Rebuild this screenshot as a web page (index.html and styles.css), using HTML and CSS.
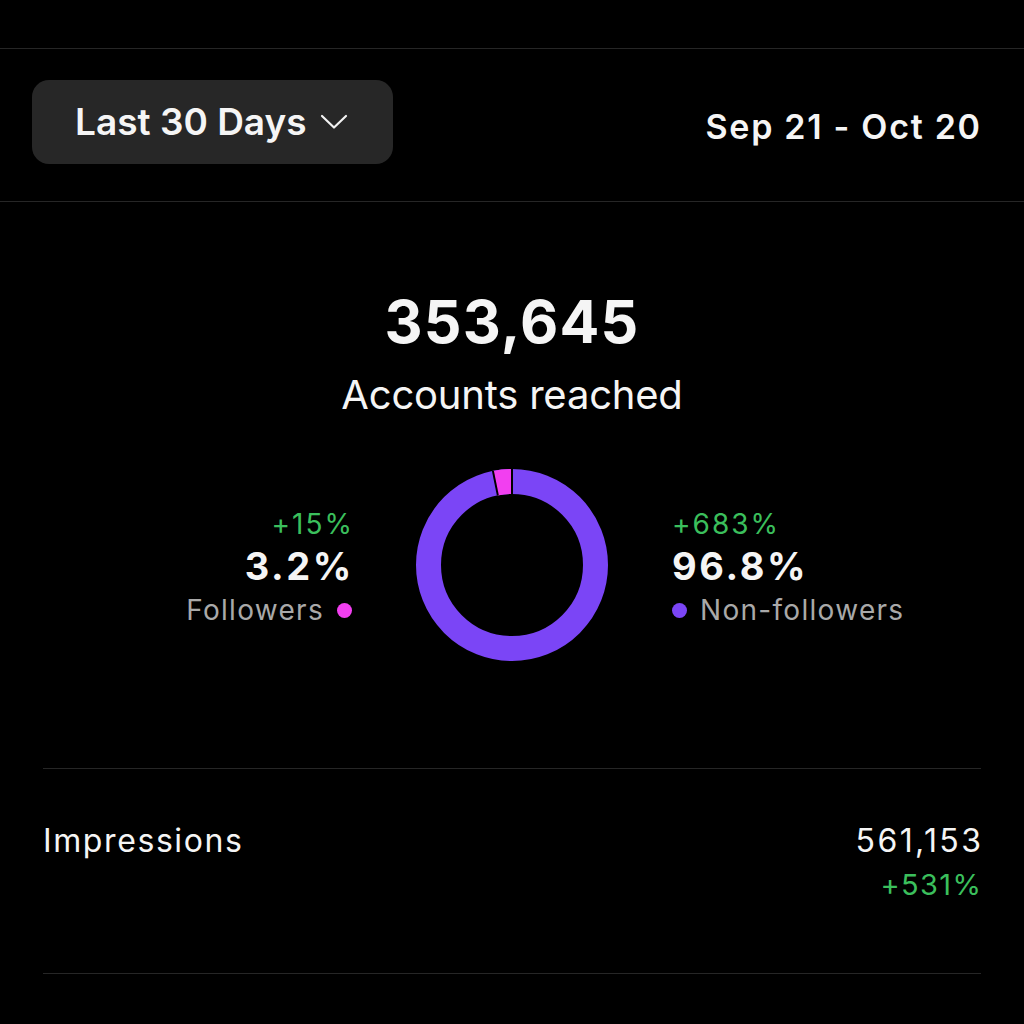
FILE: index.html
```html
<!DOCTYPE html>
<html lang="en">
<head>
<meta charset="utf-8">
<title>Accounts reached</title>
<link rel="stylesheet" href="styles.css">
</head>
<body>
<div class="page">
  <div class="rule"></div>
  <header class="range">
    <button class="range-btn" type="button">
      <span>Last 30 Days</span>
      <svg class="chev" width="28" height="16" viewBox="0 0 28 16" aria-hidden="true">
        <polyline points="2,2 14,13.5 26,2" fill="none" stroke="#f2f2f2" stroke-width="2.2" stroke-linecap="round" stroke-linejoin="round"/>
      </svg>
    </button>
    <div class="range-date">Sep 21 - Oct 20</div>
  </header>
  <div class="rule"></div>

  <section class="reach">
    <div class="total">353,645</div>
    <div class="caption">Accounts reached</div>

    <div class="split">
      <div class="stat stat-left">
        <div class="delta">+15%</div>
        <div class="share">3.2%</div>
        <div class="label"><span>Followers</span><i class="dot dot-pink"></i></div>
      </div>

      <svg class="donut" width="192" height="192" viewBox="0 0 192 192" aria-hidden="true">
        <circle cx="96" cy="96" r="83.5" fill="none" stroke="#7b45f6" stroke-width="25"/>
        <path d="M79.35 14.18 A83.5 83.5 0 0 1 96 12.5" fill="none" stroke="#f23ff0" stroke-width="25"/>
        <line x1="96" y1="0" x2="96" y2="25" stroke="#000" stroke-width="2"/>
        <line x1="76.9" y1="1.9" x2="81.84" y2="26.42" stroke="#000" stroke-width="2"/>
      </svg>

      <div class="stat stat-right">
        <div class="delta">+683%</div>
        <div class="share">96.8%</div>
        <div class="label"><i class="dot dot-purple"></i><span>Non-followers</span></div>
      </div>
    </div>
  </section>

  <section class="list">
    <div class="list-rule"></div>
    <div class="metric">
      <div class="metric-name">Impressions</div>
      <div class="metric-values">
        <div class="metric-value">561,153</div>
        <div class="metric-delta">+531%</div>
      </div>
    </div>
    <div class="list-rule"></div>
  </section>
</div>
</body>
</html>
```

FILE: styles.css
```css
* { box-sizing: border-box; }

html, body {
  margin: 0;
  padding: 0;
  background: #000;
}

body {
  font-family: Inter, "Noto Sans", "Liberation Sans", sans-serif;
  color: #f5f5f5;
  width: 1024px;
  height: 1024px;
  overflow: hidden;
}

.page {
  padding-top: 48px;
}

.rule {
  height: 1px;
  background: #262626;
}

.range {
  display: flex;
  justify-content: space-between;
  align-items: center;
  padding: 31px 44px 37px 32px;
}

.range-btn {
  display: flex;
  align-items: center;
  gap: 13px;
  height: 84px;
  padding: 0 45px 0 43px;
  border: 0;
  border-radius: 17px;
  background: #272727;
  color: #f5f5f5;
  font-family: inherit;
  font-size: 37px;
  font-weight: 600;
  line-height: 84px;
  letter-spacing: 0;
}

.chev {
  display: block;
}

.range-date {
  padding-top: 10px;
  margin-right: -1.7px;
  font-size: 34px;
  font-weight: 600;
  line-height: 40px;
  letter-spacing: 1.7px;
}

.reach {
  display: flex;
  flex-direction: column;
  align-items: center;
}

.total {
  margin-top: 84px;
  font-size: 59px;
  font-weight: 700;
  line-height: 72px;
  letter-spacing: 1.2px;
}

.caption {
  margin-top: 12px;
  font-size: 40px;
  font-weight: 400;
  line-height: 50px;
  letter-spacing: -0.2px;
}

.split {
  width: 100%;
  margin-top: 49px;
  display: grid;
  grid-template-columns: 1fr auto 1fr;
  column-gap: 64px;
  align-items: center;
}

.donut {
  display: block;
}

.stat {
  display: flex;
  flex-direction: column;
  padding-top: 6px;
}

.stat-left {
  align-items: flex-end;
  text-align: right;
}

.stat-left .delta,
.stat-left .share {
  margin-right: -2px;
}

.stat-right {
  align-items: flex-start;
}

.delta {
  color: #3bbf5c;
  font-size: 28px;
  line-height: 36px;
  letter-spacing: 2px;
}

.share {
  font-size: 38px;
  font-weight: 700;
  line-height: 48px;
  letter-spacing: 2.6px;
}

.label {
  display: flex;
  align-items: center;
  gap: 13px;
  color: #a9a9a9;
  font-size: 28px;
  line-height: 40px;
  letter-spacing: 1.3px;
}

.dot {
  display: block;
  width: 15px;
  height: 15px;
  border-radius: 50%;
}

.dot-pink { background: #f23ff0; }
.dot-purple { background: #7b45f6; }

.list {
  margin: 107px 43px 0 43px;
}

.list-rule {
  height: 1px;
  background: #262626;
}

.metric {
  display: flex;
  justify-content: space-between;
  align-items: flex-start;
  padding: 52px 0 67px 0;
}

.metric-name {
  font-size: 32px;
  line-height: 40px;
  letter-spacing: 1.6px;
}

.metric-values {
  display: flex;
  flex-direction: column;
  align-items: flex-end;
}

.metric-value {
  margin-right: -2.4px;
  font-size: 32px;
  line-height: 40px;
  letter-spacing: 2.4px;
}

.metric-delta {
  margin-top: 3px;
  margin-right: -1.4px;
  color: #3bbf5c;
  font-size: 29px;
  line-height: 42px;
  letter-spacing: 1.4px;
}
```
